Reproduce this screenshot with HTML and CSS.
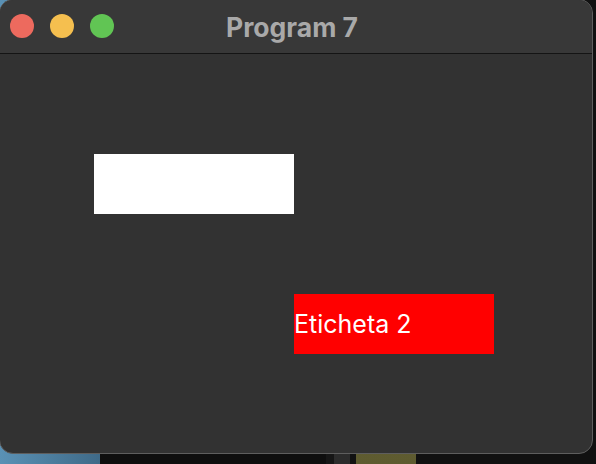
FILE: index.html
```html
<!DOCTYPE html>
<html>
<head>
<meta charset="utf-8">
<link rel="stylesheet" href="styles.css">
</head>
<body>
<div class="desktop">
  <div class="strip blue"></div>
  <div class="strip dark1"></div>
  <div class="strip dark2"></div>
  <div class="strip gray"></div>
  <div class="strip dark3"></div>
  <div class="strip olive"></div>
  <div class="strip dark4"></div>
</div>
<div class="window">
  <div class="titlebar">
    <div class="lights">
      <span class="light red"></span>
      <span class="light yellow"></span>
      <span class="light green"></span>
    </div>
    <div class="title">Program 7</div>
  </div>
  <div class="canvas">
    <div class="label label-white"></div>
    <div class="label label-red">Eticheta 2</div>
  </div>
</div>
</body>
</html>
```
FILE: styles.css
```css
html, body {
  margin: 0;
  padding: 0;
}
body {
  width: 596px;
  height: 464px;
  position: relative;
  overflow: hidden;
  background: #0e0e0e;
  font-family: Inter, "Liberation Sans", sans-serif;
}
.desktop {
  position: absolute;
  inset: 0;
  display: flex;
}
.strip { height: 100%; }
.blue { width: 100px; background: linear-gradient(90deg, #5a91b5, #3f6a88); }
.dark1 { width: 226px; background: #0e0e0e; }
.dark2 { width: 8px; background: #161616; }
.gray { width: 16px; background: #2c2c2c; }
.dark3 { width: 6px; background: #121212; }
.olive { width: 60px; background: linear-gradient(180deg, #77723f, #5e5b30); }
.dark4 { flex: 1; background: #111111; }

.window {
  position: absolute;
  left: -1px;
  top: -1px;
  width: 594px;
  height: 455px;
  box-sizing: border-box;
  border: 1px solid #5e5e5e;
  border-radius: 14px;
  overflow: hidden;
  background: #323232;
  display: flex;
  flex-direction: column;
}
.titlebar {
  height: 53px;
  flex: none;
  background: #383838;
  border-bottom: 1px solid #141414;
  position: relative;
  display: flex;
  align-items: center;
  justify-content: center;
}
.lights {
  position: absolute;
  left: 10px;
  top: 14px;
  display: flex;
  gap: 16px;
}
.light {
  width: 24px;
  height: 24px;
  border-radius: 50%;
  display: block;
}
.red { background: #ed6a5e; }
.yellow { background: #f5bf4f; }
.green { background: #61c554; }
.title {
  color: #a9a9a9;
  font-weight: 700;
  font-size: 26.5px;
  margin-left: -8px;
  margin-top: 1px;
}
.canvas {
  flex: 1;
  position: relative;
}
.label {
  position: absolute;
  width: 200px;
  height: 60px;
  display: flex;
  align-items: center;
  color: #ffffff;
  font-size: 25px;
}
.label-white {
  left: 94px;
  top: 100px;
  background: #ffffff;
}
.label-red {
  left: 294px;
  top: 240px;
  background: #ff0000;
}
```
